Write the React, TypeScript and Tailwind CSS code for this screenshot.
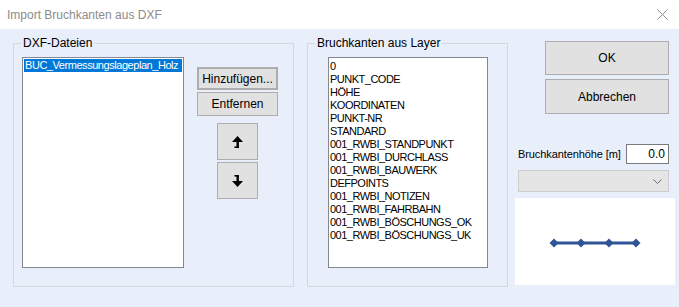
import React from "react";

const layers = [
  "0",
  "PUNKT_CODE",
  "HÖHE",
  "KOORDINATEN",
  "PUNKT-NR",
  "STANDARD",
  "001_RWBI_STANDPUNKT",
  "001_RWBI_DURCHLASS",
  "001_RWBI_BAUWERK",
  "DEFPOINTS",
  "001_RWBI_NOTIZEN",
  "001_RWBI_FAHRBAHN",
  "001_RWBI_BÖSCHUNGS_OK",
  "001_RWBI_BÖSCHUNGS_UK",
];

const ArrowUp = () => (
  <svg width="13" height="14" viewBox="0 0 13 14">
    <path d="M6.5 1 L12 7 L1 7 Z" fill="#000" />
    <rect x="5.5" y="6" width="2.4" height="7" fill="#000" />
    <rect x="3.5" y="11.4" width="4.4" height="1.6" fill="#000" />
  </svg>
);

const ArrowDown = () => (
  <svg width="13" height="14" viewBox="0 0 13 14">
    <path d="M6.5 13 L12 7 L1 7 Z" fill="#000" />
    <rect x="5.5" y="1" width="2.4" height="7" fill="#000" />
    <rect x="3.5" y="1" width="4.4" height="1.6" fill="#000" />
  </svg>
);

// Gruppe mit Titel im Rahmen, wie eine WinForms GroupBox
const Group = ({ title, width, children }: { title: string; width: number; children: React.ReactNode }) => (
  <div
    className="relative mt-[14px] h-[244px] shrink-0 border border-[#d5d9df]"
    style={{ width }}
  >
    <span className="absolute -top-[8px] left-[7px] whitespace-nowrap bg-[#e8eefa] px-[2px] leading-[14px] text-black">
      {title}
    </span>
    {children}
  </div>
);

const Btn = ({ children, className }: { children: React.ReactNode; className: string }) => (
  <div
    className={
      "flex items-center justify-center whitespace-nowrap border border-[#adadad] bg-[#e1e1e1] text-black " + className
    }
  >
    {children}
  </div>
);

export default function App() {
  return (
    <div
      className="h-[307px] w-[679px] overflow-hidden bg-[#e8eefa] text-[12px]"
      style={{ fontFamily: '"Liberation Sans", Arial, sans-serif' }}
    >
      {/* Titelleiste */}
      <div className="flex h-[29px] items-center justify-between bg-white pl-[7px] pr-[11px]">
        <span className="text-[12px] text-[#8c8c8c]">Import Bruchkanten aus DXF</span>
        <svg width="11" height="11" viewBox="0 0 11 11">
          <path d="M0.5 0.5 L10.5 10.5 M10.5 0.5 L0.5 10.5" stroke="#8c8c8c" strokeWidth="1" />
        </svg>
      </div>

      <div className="flex pl-[13px]">
        <Group title="DXF-Dateien" width={281}>
          <div className="flex pl-[8px] pt-[13px]">
            <div className="h-[211px] w-[162px] border border-[#828790] bg-white p-[1px]">
              <div className="h-[13px] overflow-hidden whitespace-nowrap bg-[#0078d7] pl-[1px] text-[11px] leading-[13px] tracking-[-0.45px] text-white">
                BUC_Vermessungslageplan_Holz
              </div>
            </div>
            <div className="ml-[13px] mt-[10px] flex flex-col items-center">
              <Btn className="h-[23px] w-[81px] border-2 border-[#0078d7]">Hinzufügen...</Btn>
              <Btn className="mt-[2px] h-[24px] w-[81px]">Entfernen</Btn>
              <Btn className="mt-[7px] h-[37px] w-[41px]">
                <ArrowUp />
              </Btn>
              <Btn className="mt-[2px] h-[37px] w-[41px]">
                <ArrowDown />
              </Btn>
            </div>
          </div>
        </Group>

        <div className="ml-[13px]">
          <Group title="Bruchkanten aus Layer" width={201}>
            <div className="pl-[20px] pt-[13px]">
              <div className="h-[211px] w-[160px] whitespace-nowrap border border-[#828790] bg-white pl-[1px] pt-[2px] text-[11px] leading-[13px] tracking-[-0.5px] text-black">
                {layers.map((l) => (
                  <div key={l}>{l}</div>
                ))}
              </div>
            </div>
          </Group>
        </div>

        {/* rechte Spalte */}
        <div className="ml-[7px] mt-[12px] flex w-[160px] flex-col">
          <Btn className="ml-[30px] h-[34px] w-[124px]">OK</Btn>
          <Btn className="ml-[30px] mt-[4px] h-[35px] w-[124px]">Abbrechen</Btn>
          <div className="ml-[3px] mt-[30px] flex w-[151px] items-center justify-between">
            <span className="whitespace-nowrap text-[11px] tracking-[-0.1px] text-black">Bruchkantenhöhe [m]</span>
            <div className="h-[20px] w-[43px] shrink-0 border border-[#7a7a7a] bg-white pr-[3px] text-right leading-[18px] text-black">
              0.0
            </div>
          </div>
          <div className="ml-[3px] mt-[6px] flex h-[22px] w-[151px] items-center justify-end border border-[#cccccc] bg-[#e5e5e5] pr-[6px]">
            <svg width="9" height="5" viewBox="0 0 9 5">
              <path d="M0.5 0.5 L4.5 4.5 L8.5 0.5" fill="none" stroke="#6d6d6d" strokeWidth="1" />
            </svg>
          </div>
          <div className="mt-[6px] flex h-[87px] w-[160px] items-center justify-center bg-white pt-[2px]">
            <svg width="92" height="12" viewBox="0 0 92 12">
              <line x1="4" y1="6" x2="88" y2="6" stroke="#2f5597" strokeWidth="3" />
              {[4, 31, 59, 86].map((x) => (
                <path key={x} d={`M${x} 1.5 L${x + 4.5} 6 L${x} 10.5 L${x - 4.5} 6 Z`} fill="#2f5597" transform="translate(1 0)" />
              ))}
            </svg>
          </div>
        </div>
      </div>
    </div>
  );
}
